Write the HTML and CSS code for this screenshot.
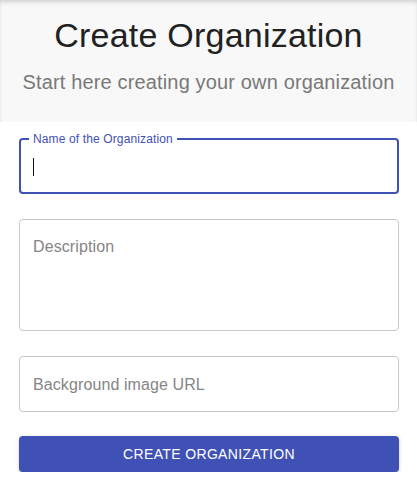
FILE: index.html
```html
<!DOCTYPE html>
<html lang="en">
<head>
<meta charset="utf-8">
<title>Create Organization</title>
<link rel="stylesheet" href="styles.css">
</head>
<body>
<header class="hero">
  <h1 class="hero-title">Create Organization</h1>
  <p class="hero-sub">Start here creating your own organization</p>
</header>
<form class="form">
  <fieldset class="field field-focused">
    <legend class="field-legend">Name of the Organization</legend>
    <div class="field-row">
      <span class="caret"></span>
      <input class="field-input" type="text" aria-label="Name of the Organization">
    </div>
  </fieldset>
  <div class="field field-outlined field-multi">
    <textarea class="field-input field-textarea" rows="4" placeholder="Description"></textarea>
  </div>
  <div class="field field-outlined field-single">
    <input class="field-input" type="text" placeholder="Background image URL">
  </div>
  <button class="btn" type="button">Create Organization</button>
</form>
</body>
</html>
```
FILE: styles.css
```css
html, body {
  margin: 0;
  padding: 0;
  background: #ffffff;
  font-family: "Liberation Sans", Arial, sans-serif;
}

.hero {
  background: #f8f8f8;
  box-shadow: inset 0 3px 4px -1px rgba(0, 0, 0, 0.16);
  padding: 15px 0 28px;
  text-align: center;
}

.hero-title {
  margin: 0;
  font-size: 34px;
  line-height: 40px;
  font-weight: 400;
  letter-spacing: 0.22px;
  color: #212121;
}

.hero-sub {
  margin: 15px 0 0;
  font-size: 20px;
  line-height: 24px;
  font-weight: 400;
  letter-spacing: 0.15px;
  color: #787878;
}

.form {
  padding: 0 18px 0 19px;
  display: flex;
  flex-direction: column;
}

.field {
  box-sizing: border-box;
  margin: 0;
  min-width: 0;
}

.field-focused {
  margin-top: 10px;
  border: 2px solid #3f51b5;
  border-radius: 4px;
  padding: 12px 12px 16px;
}

.field-legend {
  margin-left: -4px;
  padding: 0 4px;
  font-size: 12px;
  line-height: 14px;
  letter-spacing: 0.13px;
  color: #3f51b5;
}

.field-row {
  display: flex;
  align-items: center;
  height: 18px;
}

.caret {
  width: 1px;
  height: 18px;
  background: #111111;
  flex: none;
}

.field-input {
  display: block;
  flex: 1;
  width: 100%;
  min-width: 0;
  border: 0;
  outline: none;
  padding: 0;
  margin: 0;
  background: transparent;
  font-family: "Liberation Sans", Arial, sans-serif;
  font-size: 16px;
  line-height: 19px;
  height: 19px;
  letter-spacing: 0.1px;
  color: #212121;
  caret-color: transparent;
}

.field-row .field-input {
  height: 18px;
  line-height: 18px;
}

.field-input::placeholder {
  color: #858585;
  opacity: 1;
}

.field-outlined {
  margin-top: 25px;
  border: 1px solid #c8c8c8;
  border-radius: 4px;
}

.field-multi {
  padding: 17px 14px 17px 13px;
}

.field-textarea {
  height: 76px;
  resize: none;
  overflow: hidden;
}

.field-single {
  padding: 17.5px 14px 17.5px 13px;
}

.btn {
  margin-top: 24px;
  height: 36px;
  border: 0;
  border-radius: 4px;
  background: #3f51b5;
  color: #ffffff;
  font-family: "Liberation Sans", Arial, sans-serif;
  font-size: 14px;
  font-weight: 400;
  letter-spacing: 0.35px;
  text-transform: uppercase;
  box-shadow: 0 3px 1px -2px rgba(0, 0, 0, 0.2), 0 2px 2px 0 rgba(0, 0, 0, 0.14), 0 1px 5px 0 rgba(0, 0, 0, 0.12);
  padding: 0;
  cursor: pointer;
}
```
